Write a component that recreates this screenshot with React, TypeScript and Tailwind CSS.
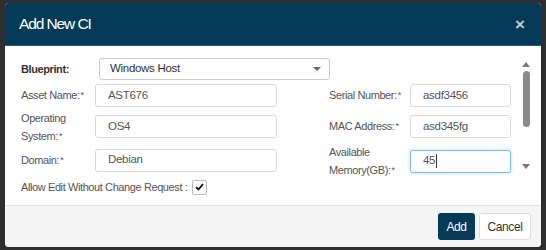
import React from 'react';

const Req = () => <sup className="text-[9px] relative -top-[1px] ml-[1px]">*</sup>;

const Field = ({ value, focused, className }: { value: string; focused?: boolean; className: string }) => (
  <div
    className={`h-[23px] flex items-center pl-[12px] rounded-[3px] bg-white border text-[11.5px] tracking-[-0.3px] text-[#555] ${
      focused ? 'border-[#7cc0f0] shadow-[0_0_3px_rgba(102,175,233,0.6)]' : 'border-[#d9d9d9]'
    } ${className}`}
  >
    {value}
    {focused && <span className="w-px h-[14px] bg-[#333] ml-px" />}
  </div>
);

export default function App() {
  return (
    <div className="w-[546px] h-[250px] bg-[#2e2e2e] pt-[3px] pl-[5px] font-['Liberation_Sans',Arial,sans-serif]">
      <div className="w-[536px] h-[244px] rounded-[4px] overflow-hidden flex flex-col bg-white">
        {/* Header */}
        <div className="h-[43px] bg-[#033a57] flex items-center justify-between pl-[14px] pr-[16px] border-b border-[#2a5670]">
          <h1 className="text-white text-[15.5px] tracking-[-1.1px]">Add New CI</h1>
          <span className="text-[#c9cdd1] text-[17px] font-bold leading-none">×</span>
        </div>

        {/* Body */}
        <div className="h-[159px] flex text-[11px] tracking-[-0.4px] text-[#555] whitespace-nowrap">
          <div className="flex-1 pl-[16px] pt-[12px] flex flex-col">
            <div className="h-[22px] flex items-center">
              <span className="w-[78px] font-bold text-[#333]">Blueprint:</span>
              <div className="w-[231px] h-[22px] border border-[#ccc] rounded-[3px] flex items-center justify-between pl-[10px] pr-[8px] text-[11.5px] tracking-[-0.3px] text-[#333]">
                Windows Host
                <span className="w-0 h-0 border-l-[4px] border-r-[4px] border-t-[4px] border-l-transparent border-r-transparent border-t-[#666]" />
              </div>
            </div>

            <div className="h-[23px] mt-[4px] flex items-center">
              <span className="w-[74px]">Asset Name:<Req /></span>
              <Field value="AST676" className="w-[182px]" />
              <span className="w-[81px] ml-[52px]">Serial Number:<Req /></span>
              <Field value="asdf3456" className="w-[101px]" />
            </div>

            <div className="h-[37px] flex items-center mt-px">
              <span className="w-[74px] leading-[18px]">
                Operating
                <br />
                System:<Req />
              </span>
              <Field value="OS4" className="w-[182px]" />
              <span className="w-[81px] ml-[52px]">MAC Address:<Req /></span>
              <Field value="asd345fg" className="w-[101px]" />
            </div>

            <div className="h-[36px] flex items-center mt-[-3px]">
              <span className="w-[74px]">Domain:<Req /></span>
              <Field value="Debian" className="w-[182px]" />
              <span className="w-[81px] ml-[52px] leading-[18px] mt-[2px]">
                Available
                <br />
                Memory(GB):<Req />
              </span>
              <Field value="45" focused className="w-[101px] mt-[2px]" />
            </div>

            <div className="h-[18px] flex items-center">
              <span>Allow Edit Without Change Request :</span>
              <span className="ml-[5px] w-[15px] h-[15px] border border-[#bbb] rounded-[2px] bg-white flex items-center justify-center">
                <svg width="9" height="8" viewBox="0 0 9 8">
                  <path d="M1 4.2 L3.4 6.5 L8 1.2" stroke="#111" strokeWidth="1.8" fill="none" />
                </svg>
              </span>
            </div>
          </div>

          {/* Scrollbar */}
          <div className="w-[26px] flex flex-col items-center pt-[16px] pr-[4px]">
            <span className="w-0 h-0 border-l-[4px] border-r-[4px] border-b-[5px] border-l-transparent border-r-transparent border-b-[#777]" />
            <div className="w-[7px] h-[56px] rounded-full bg-[#8a8a8a] mt-[4px]" />
            <span className="w-0 h-0 border-l-[4px] border-r-[4px] border-t-[5px] border-l-transparent border-r-transparent border-t-[#777] mt-[37px]" />
          </div>
        </div>

        {/* Footer */}
        <div className="flex-1 bg-[#f4f4f4] border-t border-[#e3e3e3] flex items-start justify-end gap-[4px] pt-[7px] pr-[10px]">
          <button className="h-[27px] w-[37px] rounded-[3px] bg-[#033a57] text-white text-[12px] tracking-[-0.4px]">Add</button>
          <button className="h-[27px] w-[52px] rounded-[3px] bg-white border border-[#ddd] text-[#333] text-[12px] tracking-[-0.4px]">Cancel</button>
        </div>
      </div>
    </div>
  );
}
